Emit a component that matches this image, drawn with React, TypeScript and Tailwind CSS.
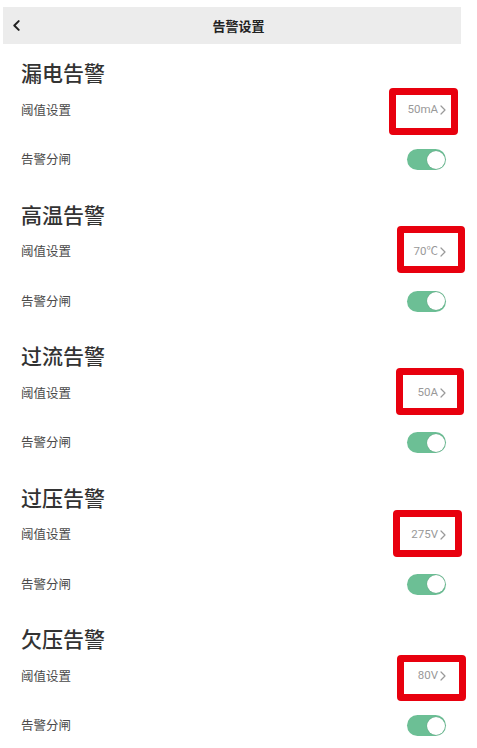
import React from "react";

interface Alarm {
  title: string;
  value: string;
  box: string;
}

// red annotation boxes sit over the value cell; offsets are from the section top
const ALARMS: Alarm[] = [
  { title: "漏电告警", value: "50mA", box: "top-[44px] left-[389px] w-[69px] h-[47px]" },
  { title: "高温告警", value: "70℃", box: "top-[40.5px] left-[397px] w-[68px] h-[47px]" },
  { title: "过流告警", value: "50A", box: "top-[41px] left-[396px] w-[68px] h-[47px]" },
  { title: "过压告警", value: "275V", box: "top-[41.5px] left-[393px] w-[69px] h-[47px]" },
  { title: "欠压告警", value: "80V", box: "top-[45px] left-[397px] w-[69px] h-[46px]" },
];

function Chevron({ className }: { className?: string }) {
  return (
    <svg viewBox="0 0 6 10" className={className} fill="none" stroke="currentColor" strokeWidth={1.2} strokeLinecap="round" strokeLinejoin="round">
      <path d="M1 1l4 4-4 4" />
    </svg>
  );
}

function Toggle() {
  return (
    <div className="flex h-[21px] w-[39px] items-center justify-end rounded-full bg-[#6cbf95] pr-[1.5px]">
      <div className="h-[18px] w-[18px] rounded-full bg-white shadow-[0_0_1px_rgba(0,0,0,0.3)]" />
    </div>
  );
}

function Section({ alarm }: { alarm: Alarm }) {
  return (
    <section className="relative h-[141.5px] pt-[14px] pl-[21px] pr-[31px]">
      <h2 className="h-[28px] text-[21px] leading-[28px] font-medium text-[#333333]">{alarm.title}</h2>

      {/* Threshold */}
      <div className="flex h-[48px] items-center justify-between">
        <span className="text-[12.5px] text-[#4a4a4a]">阈值设置</span>
        <div className="flex items-center gap-[2px] text-[#999999]">
          <span className="text-[11.5px] font-normal font-['Roboto','Noto_Sans_CJK_SC',sans-serif]">{alarm.value}</span>
          <Chevron className="h-[10px] w-[6px]" />
        </div>
      </div>

      {/* Trip */}
      <div className="flex h-[51.5px] items-center justify-between">
        <span className="text-[12.5px] text-[#4a4a4a]">告警分闸</span>
        <Toggle />
      </div>

      <div className={`absolute rounded-[4px] border-[7px] border-[#e8000e] ${alarm.box}`} />
    </section>
  );
}

export default function App() {
  return (
    <div className="min-h-[748px] w-[477px] bg-white font-['Noto_Sans_CJK_SC','Noto_Sans',sans-serif]">
      <header className="ml-[3px] mr-[16px] mt-[7px] flex h-[37px] items-center bg-[#ececec] pl-[10px]">
        <Chevron className="h-[11px] w-[7px] -scale-x-100 text-[#222222] [stroke-width:1.8px]" />
        <h1 className="flex-1 pr-[4px] text-center text-[13px] font-bold text-[#222222]">告警设置</h1>
      </header>
      {ALARMS.map((a) => (
        <Section key={a.title} alarm={a} />
      ))}
    </div>
  );
}
